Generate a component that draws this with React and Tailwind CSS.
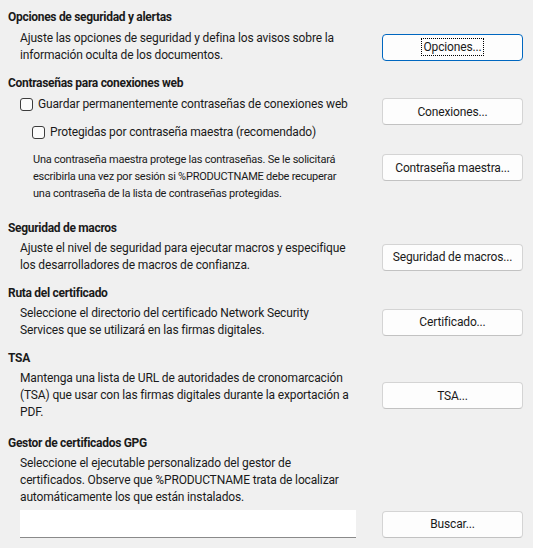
import React from "react";

const font = { fontFamily: '"Segoe UI", Roboto, "Noto Sans", sans-serif' };

function Btn({ children, focused }) {
  return (
    <div
      className={
        "w-[141px] h-[27px] shrink-0 flex items-center justify-center rounded-[4px] bg-[#fdfdfd] text-[12px] tracking-[-0.15px] text-[#1a1a1a] " +
        (focused ? "border border-[#0067c0]" : "border border-[#d4d4d4] border-b-[#c2c2c2]")
      }
    >
      {focused ? (
        <span className="border border-dotted border-black px-[1px] leading-[16px]">{children}</span>
      ) : (
        <span className="leading-[16px]">{children}</span>
      )}
    </div>
  );
}

function Heading({ children, className = "" }) {
  return (
    <div className={"pl-[8px] text-[12px] font-bold tracking-[-0.3px] leading-[17px] text-[#1a1a1a] whitespace-nowrap " + className}>
      {children}
    </div>
  );
}

function Check({ label, className = "" }) {
  return (
    <div className={"flex items-center gap-[5px] h-[18px] whitespace-nowrap " + className}>
      <span className="w-[13px] h-[13px] rounded-[3px] border border-[#3c3c3c] bg-[#fbfbfb] shrink-0" />
      <span className="text-[12px] tracking-[-0.15px] text-[#1a1a1a]">{label}</span>
    </div>
  );
}

const body = "pl-[20px] text-[12px] tracking-[-0.15px] leading-[17px] text-[#1a1a1a] whitespace-nowrap";

export default function App() {
  return (
    <div className="w-[533px] h-[548px] bg-[#f0f0f0] overflow-hidden pt-[9px] pr-[10px]" style={font}>
      <Heading>Opciones de seguridad y alertas</Heading>
      <div className="flex items-center justify-between mt-[4px]">
        <div className={body}>
          Ajuste las opciones de seguridad y defina los avisos sobre la
          <br />
          información oculta de los documentos.
        </div>
        <Btn focused>Opciones...</Btn>
      </div>

      <Heading className="mt-[11px]">Contraseñas para conexiones web</Heading>
      <div className="flex items-start justify-between mt-[3px]">
        <div className="flex flex-col">
          <Check className="pl-[20px]" label="Guardar permanentemente contraseñas de conexiones web" />
          <Check className="pl-[32px] mt-[10px]" label="Protegidas por contraseña maestra (recomendado)" />
        </div>
        <div className="mt-[3px]">
          <Btn>Conexiones...</Btn>
        </div>
      </div>
      <div className="flex items-start justify-between mt-[10px]">
        <div className="pl-[33px] text-[11px] tracking-[-0.23px] leading-[17px] text-[#1a1a1a] whitespace-nowrap">
          Una contraseña maestra protege las contraseñas. Se le solicitará
          <br />
          escribirla una vez por sesión si %PRODUCTNAME debe recuperar
          <br />
          una contraseña de la lista de contraseñas protegidas.
        </div>
        <div className="mt-[3px]">
          <Btn>Contraseña maestra...</Btn>
        </div>
      </div>

      <Heading className="mt-[18px]">Seguridad de macros</Heading>
      <div className="flex items-center justify-between mt-[3px]">
        <div className={body}>
          Ajuste el nivel de seguridad para ejecutar macros y especifique
          <br />
          los desarrolladores de macros de confianza.
        </div>
        <Btn>Seguridad de macros...</Btn>
      </div>

      <Heading className="mt-[11px]">Ruta del certificado</Heading>
      <div className="flex items-center justify-between mt-[3px]">
        <div className={body}>
          Seleccione el directorio del certificado Network Security
          <br />
          Services que se utilizará en las firmas digitales.
        </div>
        <Btn>Certificado...</Btn>
      </div>

      <Heading className="mt-[11px]">TSA</Heading>
      <div className="flex items-center justify-between mt-[3px]">
        <div className={body}>
          Mantenga una lista de URL de autoridades de cronomarcación
          <br />
          (TSA) que usar con las firmas digitales durante la exportación a
          <br />
          PDF.
        </div>
        <Btn>TSA...</Btn>
      </div>

      <Heading className="mt-[14px]">Gestor de certificados GPG</Heading>
      <div className={"mt-[3px] " + body}>
        Seleccione el ejecutable personalizado del gestor de
        <br />
        certificados. Observe que %PRODUCTNAME trata de localizar
        <br />
        automáticamente los que están instalados.
      </div>
      <div className="flex items-center justify-between mt-[4px] pl-[20px]">
        <div className="w-[336px] h-[28px] bg-white border-b border-[#8a8a8a]" />
        <Btn>Buscar...</Btn>
      </div>
    </div>
  );
}
